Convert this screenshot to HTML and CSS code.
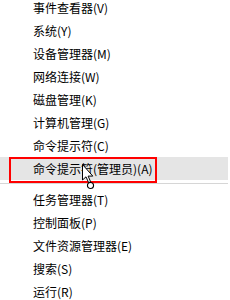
FILE: index.html
```html
<!DOCTYPE html>
<html lang="zh-CN">
<head>
    <meta charset="UTF-8">
    <title>Win+X</title>
    <link rel="stylesheet" href="styles.css">
</head>
<body>
    <ul class="menu">
        <li class="item">事件查看器(V)</li>
        <li class="item">系统(Y)</li>
        <li class="item">设备管理器(M)</li>
        <li class="item">网络连接(W)</li>
        <li class="item">磁盘管理(K)</li>
        <li class="item">计算机管理(G)</li>
        <li class="item">命令提示符(C)</li>
        <li class="item hover">命令提示符(管理员)(A)
            <span class="mark"></span>
            <svg class="cursor" width="14" height="26" viewBox="0 0 14 26">
                <path d="M0.5 0.5 L0.5 16 L4 12.8 L6.6 18.6 L8.6 17.7 L6.1 12.1 L10.8 12.1 Z" fill="#fff" stroke="#000" stroke-width="1"/>
                <circle cx="8.5" cy="21.5" r="3" fill="none" stroke="#000" stroke-width="1.2"/>
                <circle cx="8.5" cy="21.5" r="1.8" fill="none" stroke="#fff" stroke-width="1"/>
            </svg>
        </li>
        <li class="sep"></li>
        <li class="item">任务管理器(T)</li>
        <li class="item">控制面板(P)</li>
        <li class="item">文件资源管理器(E)</li>
        <li class="item">搜索(S)</li>
        <li class="item">运行(R)</li>
    </ul>
</body>
</html>
```

FILE: styles.css
```css
body {
    margin: 0;
    background: #fff;
    font-family: "Noto Sans CJK SC", "Noto Sans", sans-serif;
    font-size: 12px;
    color: #000;
    overflow: hidden;
}
.menu {
    list-style: none;
    margin: -4px 0 0 0;
    padding: 0;
    width: 228px;
}
.item {
    position: relative;
    height: 23px;
    line-height: 23px;
    padding-left: 33px;
    white-space: nowrap;
}
.hover {
    background-color: #e5e5e5;
}
.sep {
    height: 1px;
    margin: 3px 0 4px 0;
    background-color: #d6d6d6;
}
.mark {
    position: absolute;
    top: 0;
    left: 9px;
    width: 144px;
    height: 22px;
    border: 2px solid #f00;
    z-index: 2;
}
.cursor {
    position: absolute;
    top: 7px;
    left: 82px;
    z-index: 3;
}
```
